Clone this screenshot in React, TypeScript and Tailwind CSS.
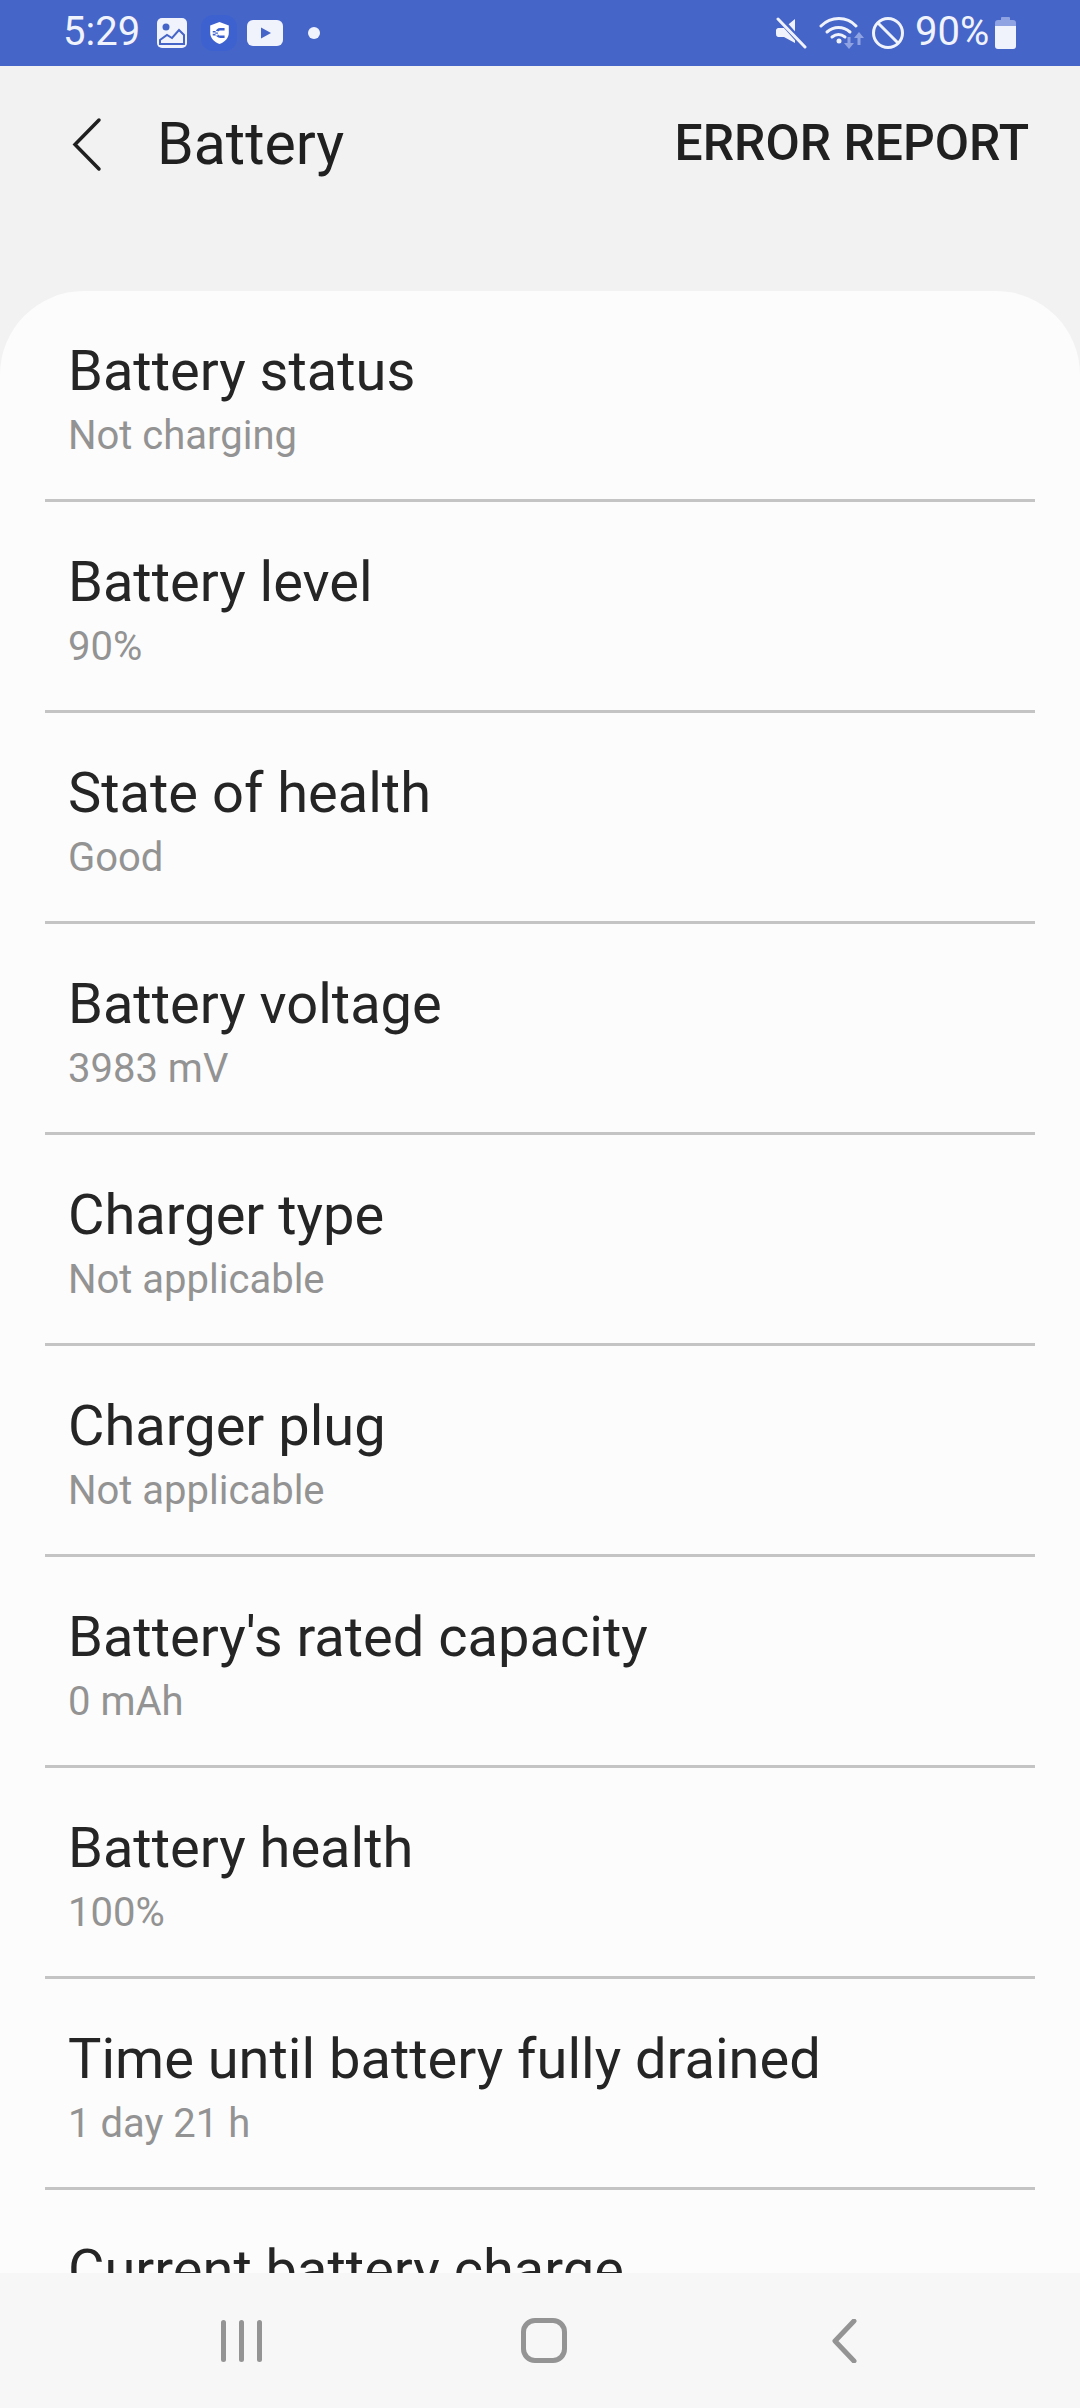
const rows = [
  { title: "Battery status", value: "Not charging" },
  { title: "Battery level", value: "90%" },
  { title: "State of health", value: "Good" },
  { title: "Battery voltage", value: "3983 mV" },
  { title: "Charger type", value: "Not applicable" },
  { title: "Charger plug", value: "Not applicable" },
  { title: "Battery's rated capacity", value: "0 mAh" },
  { title: "Battery health", value: "100%" },
  { title: "Time until battery fully drained", value: "1 day 21 h" },
  // value of this row is hidden behind the nav bar
  { title: "Current battery charge" },
];

function StatusBar() {
  return (
    <div className="flex h-[66px] shrink-0 items-center bg-[#4665c8] text-[40px] leading-none text-[#f0f3fc]">
      <span className="ml-[63px] w-[76px] pb-[3px]">5:29</span>
      <svg className="ml-[18px] h-[30px] w-[30px]" viewBox="0 0 30 30">
        <rect width="30" height="30" rx="5" fill="#f0f3fc" />
        <circle cx="9" cy="9" r="3.5" fill="#4665c8" />
        <path d="M3 26v-4l7-5 5 3 7-8 5 5v9z" fill="none" stroke="#4665c8" strokeWidth="2" />
      </svg>
      <span className="ml-[14px] flex h-[36px] w-[36px] items-center justify-center rounded-[12px] bg-[#3d62cf]">
        <svg className="h-[22px] w-[19px]" viewBox="0 0 22 26">
          <path d="M11 0 22 4v9c0 6-5 11-11 13C5 24 0 19 0 13V4z" fill="#fff" />
          <path d="M17 7h-5a6 6 0 0 0 0 12h5v-3h-5a3 3 0 0 1 0-6h5zM3 10.500h6v2H3zM3 14h6v2H3z" fill="#3d62cf" />
        </svg>
      </span>
      <svg className="ml-[10px] h-[26px] w-[36px]" viewBox="0 0 36 26">
        <rect width="36" height="26" rx="6" fill="#f0f3fc" />
        <path d="M14 7.500 24 13l-10 5.500z" fill="#4665c8" />
      </svg>
      <span className="ml-[25px] h-[12px] w-[12px] rounded-full bg-[#f0f3fc]" />

      <svg className="ml-[455px] h-[32px] w-[32px]" viewBox="0 0 32 32">
        <path d="M3 11h6l11-9v24L9 20H3a3 3 0 0 1-2-3v-4a3 3 0 0 1 2-2z" fill="#f0f3fc" />
        <path d="M4 1l26 29" stroke="#4665c8" strokeWidth="6" />
        <path d="M3 2l27 28" stroke="#f0f3fc" strokeWidth="3" strokeLinecap="round" />
      </svg>
      <svg className="ml-[12px] h-[34px] w-[46px]" viewBox="0 0 46 34">
        <g fill="none" stroke="#f0f3fc" strokeWidth="3" strokeLinecap="round">
          <path d="M2 10C12 0 28 0 37 10" />
          <path d="M8 16c7-6 16-6 23 0" />
          <path d="M13 21c4-3 9-3 13 0" />
        </g>
        <circle cx="20" cy="25" r="2.500" fill="#f0f3fc" />
        <path d="M30 21v9M40 29v-9" fill="none" stroke="#8fa3e2" strokeWidth="3" />
        <path d="M25 27h10l-5 6zM35 22h10l-5-6z" fill="#8fa3e2" />
      </svg>
      <svg className="ml-[6px] h-[34px] w-[34px]" viewBox="0 0 34 34">
        <circle cx="17" cy="17" r="14.500" fill="none" stroke="#f0f3fc" strokeWidth="3" />
        <path d="M7 7l20 20" stroke="#f0f3fc" strokeWidth="3" />
      </svg>
      <span className="ml-[10px] w-[75px] pb-[3px]">90%</span>
      <svg className="ml-[5px] h-[32px] w-[21px]" viewBox="0 0 21 32">
        <path d="M7 0h7a1 1 0 0 1 1 1v2h3a3 3 0 0 1 3 3v3H0V6a3 3 0 0 1 3-3h3V1a1 1 0 0 1 1-1z" fill="#8fa3e2" />
        <path d="M0 9h21v20a3 3 0 0 1-3 3H3a3 3 0 0 1-3-3z" fill="#f0f3fc" />
      </svg>
    </div>
  );
}

function Header() {
  return (
    <div className="flex h-[225px] shrink-0 items-start bg-[#f2f2f2] text-[#202020]">
      <svg className="ml-[72px] mt-[51px] h-[55px] w-[30px]" viewBox="0 0 30 55">
        <path d="M27 3 3 27.500 27 52" fill="none" stroke="#202020" strokeWidth="3.500" strokeLinecap="round" />
      </svg>
      <span className="ml-[55px] mt-[45px] text-[59px] leading-[66px]">Battery</span>
      <span className="ml-auto mr-[51px] mt-[47px] text-[49.800px] font-medium leading-[60px]">ERROR REPORT</span>
    </div>
  );
}

function NavBar() {
  return (
    <div className="flex h-[135px] shrink-0 items-center bg-[#f7f7f7]">
      <div className="ml-[221px] flex gap-[13px]">
        <span className="h-[42px] w-[5px] rounded-full bg-[#949494]" />
        <span className="h-[42px] w-[5px] rounded-full bg-[#949494]" />
        <span className="h-[42px] w-[5px] rounded-full bg-[#949494]" />
      </div>
      <span className="ml-[259px] h-[45px] w-[46px] rounded-[14px] border-[5px] border-[#949494]" />
      <svg className="ml-[265px] h-[44px] w-[25px]" viewBox="0 0 25 44">
        <path d="M22 2 3 22l19 20" fill="none" stroke="#949494" strokeWidth="5" strokeLinecap="round" strokeLinejoin="round" />
      </svg>
    </div>
  );
}

export default function App() {
  return (
    <div className="flex h-[2408px] w-[1080px] flex-col overflow-hidden bg-[#f2f2f2] font-['Roboto',sans-serif]">
      <StatusBar />
      <Header />
      <div className="min-h-0 flex-1 overflow-hidden rounded-t-[84px] bg-[#fcfcfc]">
        {rows.map((row) => (
          <div key={row.title} className="mx-[45px] h-[211px] border-b-[3px] border-[#c4c4c4] px-[23px] pt-[48px]">
            <div className="text-[56px] leading-[64px] text-[#252525]">{row.title}</div>
            {row.value && <div className="mt-[9px] text-[40px] leading-[48px] text-[#939393]">{row.value}</div>}
          </div>
        ))}
      </div>
      <NavBar />
    </div>
  );
}
